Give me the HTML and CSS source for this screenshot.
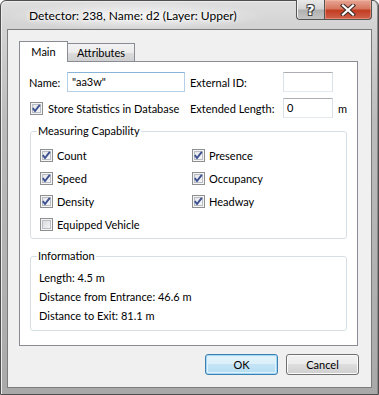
FILE: index.html
```html
<!DOCTYPE html>
<html lang="en">
<head>
    <meta charset="UTF-8">
    <title>Detector Properties</title>
    <link rel="stylesheet" href="styles.css">
</head>
<body>

    <div class="window">
        <div class="titlebar">
            <div class="title">Detector: 238, Name: d2 (Layer: Upper)</div>
            <div class="caption-buttons">
                <div class="cap-btn help">?</div>
                <div class="cap-btn close">
                    <svg width="16" height="12" viewBox="0 0 16 12">
                        <path d="M3 1.5 L13 10.5 M13 1.5 L3 10.5" stroke="#3b2a28" stroke-width="4.2" stroke-linecap="square"/>
                        <path d="M3 1.5 L13 10.5 M13 1.5 L3 10.5" stroke="#ffffff" stroke-width="2.2" stroke-linecap="square"/>
                    </svg>
                </div>
            </div>
        </div>

        <div class="client">
            <!-- tab strip -->
            <div class="tabs">
                <div class="tab active">Main</div>
                <div class="tab">Attributes</div>
            </div>

            <div class="tab-page">
                <div class="form-row">
                    <div class="cell-left">
                        <span class="lbl name-lbl">Name:</span>
                        <div class="textbox focused name-box">"aa3w"</div>
                    </div>
                    <span class="lbl right-lbl">External ID:</span>
                    <div class="textbox small-box"></div>
                </div>
                <div class="form-row">
                    <div class="cell-left">
                        <span class="check-item store"><span class="cb on"><svg width="11" height="11" viewBox="0 0 11 11"><polyline points="1.8,5.2 4,8 8.8,1.8" fill="none" stroke="#3d5190" stroke-width="1.9"/></svg></span>Store Statistics in Database</span>
                    </div>
                    <span class="lbl right-lbl">Extended Length:</span>
                    <div class="textbox small-box">0</div>
                    <span class="unit">m</span>
                </div>

                <fieldset class="group">
                    <legend>Measuring Capability</legend>
                    <div class="cap-grid">
                        <span class="check-item"><span class="cb on"><svg width="11" height="11" viewBox="0 0 11 11"><polyline points="1.8,5.2 4,8 8.8,1.8" fill="none" stroke="#3d5190" stroke-width="1.9"/></svg></span>Count</span>
                        <span class="check-item"><span class="cb on"><svg width="11" height="11" viewBox="0 0 11 11"><polyline points="1.8,5.2 4,8 8.8,1.8" fill="none" stroke="#3d5190" stroke-width="1.9"/></svg></span>Presence</span>
                        <span class="check-item"><span class="cb on"><svg width="11" height="11" viewBox="0 0 11 11"><polyline points="1.8,5.2 4,8 8.8,1.8" fill="none" stroke="#3d5190" stroke-width="1.9"/></svg></span>Speed</span>
                        <span class="check-item"><span class="cb on"><svg width="11" height="11" viewBox="0 0 11 11"><polyline points="1.8,5.2 4,8 8.8,1.8" fill="none" stroke="#3d5190" stroke-width="1.9"/></svg></span>Occupancy</span>
                        <span class="check-item"><span class="cb on"><svg width="11" height="11" viewBox="0 0 11 11"><polyline points="1.8,5.2 4,8 8.8,1.8" fill="none" stroke="#3d5190" stroke-width="1.9"/></svg></span>Density</span>
                        <span class="check-item"><span class="cb on"><svg width="11" height="11" viewBox="0 0 11 11"><polyline points="1.8,5.2 4,8 8.8,1.8" fill="none" stroke="#3d5190" stroke-width="1.9"/></svg></span>Headway</span>
                        <span class="check-item"><span class="cb"></span>Equipped Vehicle</span>
                    </div>
                </fieldset>

                <fieldset class="group info">
                    <legend>Information</legend>
                    <div class="info-lines">
                        <div>Length: 4.5 m</div>
                        <div>Distance from Entrance: 46.6 m</div>
                        <div>Distance to Exit: 81.1 m</div>
                    </div>
                </fieldset>
            </div>

            <div class="dialog-buttons">
                <button class="btn default">OK</button>
                <button class="btn">Cancel</button>
            </div>
        </div>
    </div>

</body>
</html>
```
FILE: styles.css
```css
body {
    margin: 0;
    padding: 0;
    font-family: Lato, "Liberation Sans", sans-serif;
    font-size: 11px;
    color: #000;
    background: #ffffff;
}
.window {
    width: 379px;
    height: 395px;
    box-sizing: border-box;
    border: 1px solid #4e4e4e;
    border-radius: 6px 6px 0 0;
    padding: 0 6px 6px 6px;
    display: flex;
    flex-direction: column;
    background: linear-gradient(to bottom, #dedede 0, #d2d2d2 28px, #bcbcbc 120px, #a9a9a9 100%);
    box-shadow: inset 1px 1px 0 #ececec, inset -1px 0 0 #8a8a8a;
}
.titlebar {
    height: 28px;
    display: flex;
    align-items: flex-start;
    background: radial-gradient(ellipse 130px 14px at 130px 15px, rgba(255,255,255,0.75), rgba(255,255,255,0));
}
.title {
    margin-left: 22px;
    font-size: 12px;
    line-height: 29px;
    color: #000;
    text-shadow: 0 0 6px #fff, 0 0 3px #fff;
}
.caption-buttons {
    margin-left: auto;
    margin-top: -1px;
    display: flex;
}
.cap-btn {
    height: 20px;
    box-sizing: border-box;
    border: 1px solid #545454;
    border-top: none;
    display: flex;
    align-items: center;
    justify-content: center;
}
.help {
    width: 28px;
    border-right: none;
    border-radius: 0 0 0 4px;
    background: linear-gradient(to bottom, #e9e9e9 0, #d4d4d4 45%, #b0b0b0 55%, #c4c4c4 100%);
    box-shadow: inset 1px 0 0 #f4f4f4;
    font: bold 14px "DejaVu Sans", sans-serif;
    color: #fff;
    text-shadow: 0 0 1px #2a2a2a, 1px 1px 0 #444, -1px -1px 0 #444, 1px -1px 0 #444, -1px 1px 0 #444;
}
.close {
    width: 48px;
    border-radius: 0 0 4px 0;
    background: linear-gradient(to bottom, #e6a796 0, #d6775f 45%, #c23d22 55%, #d2614a 100%);
    box-shadow: inset 0 0 0 1px rgba(255,200,180,0.4);
}
.client {
    flex: 1;
    border: 1px solid #7c7c7c;
    background: #f0f0f0;
    padding: 11px 13px 0 11px;
    display: flex;
    flex-direction: column;
}
.tabs {
    display: flex;
    align-items: flex-end;
    height: 20px;
}
.tab {
    height: 18px;
    box-sizing: border-box;
    border: 1px solid #898c95;
    border-bottom: none;
    padding: 0 9px;
    line-height: 17px;
    background: linear-gradient(to bottom, #f3f3f3 0, #ebebeb 50%, #dddddd 50%, #cfcfcf 100%);
    margin-left: -1px;
}
.tab.active {
    height: 21px;
    margin-bottom: -1px;
    margin-left: 0;
    width: 49px;
    padding: 0;
    text-align: center;
    line-height: 20px;
    background: #fff;
    position: relative;
    z-index: 1;
}
.tab-page {
    height: 285px;
    box-sizing: border-box;
    border: 1px solid #898c95;
    background: #fff;
    padding: 10px 0 0 9px;
}
.form-row {
    display: flex;
    align-items: center;
    height: 20px;
    margin-bottom: 6px;
}
.cell-left {
    width: 161px;
    display: flex;
    align-items: center;
}
.name-lbl {
    width: 38px;
}
.right-lbl {
    width: 93px;
}
.textbox {
    height: 20px;
    box-sizing: border-box;
    border: 1px solid #dbdfe6;
    border-top-color: #abadb3;
    border-bottom-color: #e3e9ef;
    background: #fff;
    padding-left: 3px;
    line-height: 18px;
}
.focused {
    border-color: #b5cfe7;
    border-top-color: #8ab3d8;
}
.name-box {
    width: 118px;
    padding-left: 4px;
}
.small-box {
    width: 50px;
}
.unit {
    margin-left: 5px;
}
.check-item {
    display: flex;
    align-items: center;
    gap: 4px;
    height: 23px;
}
.check-item.store {
    margin-left: 1px;
    gap: 5px;
}
.cb {
    width: 13px;
    height: 13px;
    box-sizing: border-box;
    border: 1px solid #8e8f8f;
    background: linear-gradient(135deg, #d0d3d8 0, #e8e9eb 55%, #f8f8f8 100%);
    box-shadow: inset 0 0 0 1px #f4f4f4, inset 0 0 0 2px #b8bcc4;
    display: flex;
}
.cb.on {
    background: linear-gradient(135deg, #dfe2e6 0, #eeeff1 55%, #fafafa 100%);
}
.group {
    margin: 6px 10px 0 1px;
    padding: 0;
    border: 1px solid #d5dfe5;
    border-radius: 3px;
    min-width: 0;
}
.group legend {
    margin-left: 6px;
    padding: 0 1px;
    line-height: 14px;
}
.cap-grid {
    display: grid;
    grid-template-columns: 152px 1fr;
    padding: 6px 0 2px 9px;
}
.group.info {
    margin-top: 10px;
}
.info-lines {
    padding: 5px 0 5px 8px;
    line-height: 19px;
}
.dialog-buttons {
    display: flex;
    justify-content: flex-end;
    gap: 8px;
    margin-top: 8px;
    margin-right: -1px;
}
.btn {
    width: 73px;
    height: 21px;
    box-sizing: border-box;
    border: 1px solid #707070;
    border-radius: 3px;
    font-family: Lato, "Liberation Sans", sans-serif;
    font-size: 11px;
    color: #000;
    padding: 0;
    background: linear-gradient(to bottom, #f2f2f2 0, #ebebeb 50%, #dddddd 50%, #cfcfcf 100%);
    box-shadow: inset 0 0 0 1px #fbfbfb;
}
.btn.default {
    border-color: #3c7fb1;
    background: linear-gradient(to bottom, #e5f4fc 0, #d9eff9 50%, #c4e5f6 50%, #b4dcf1 100%);
    box-shadow: inset 0 0 0 1px #a4d8f4, inset 0 0 0 2px #dff2fc;
}
```
